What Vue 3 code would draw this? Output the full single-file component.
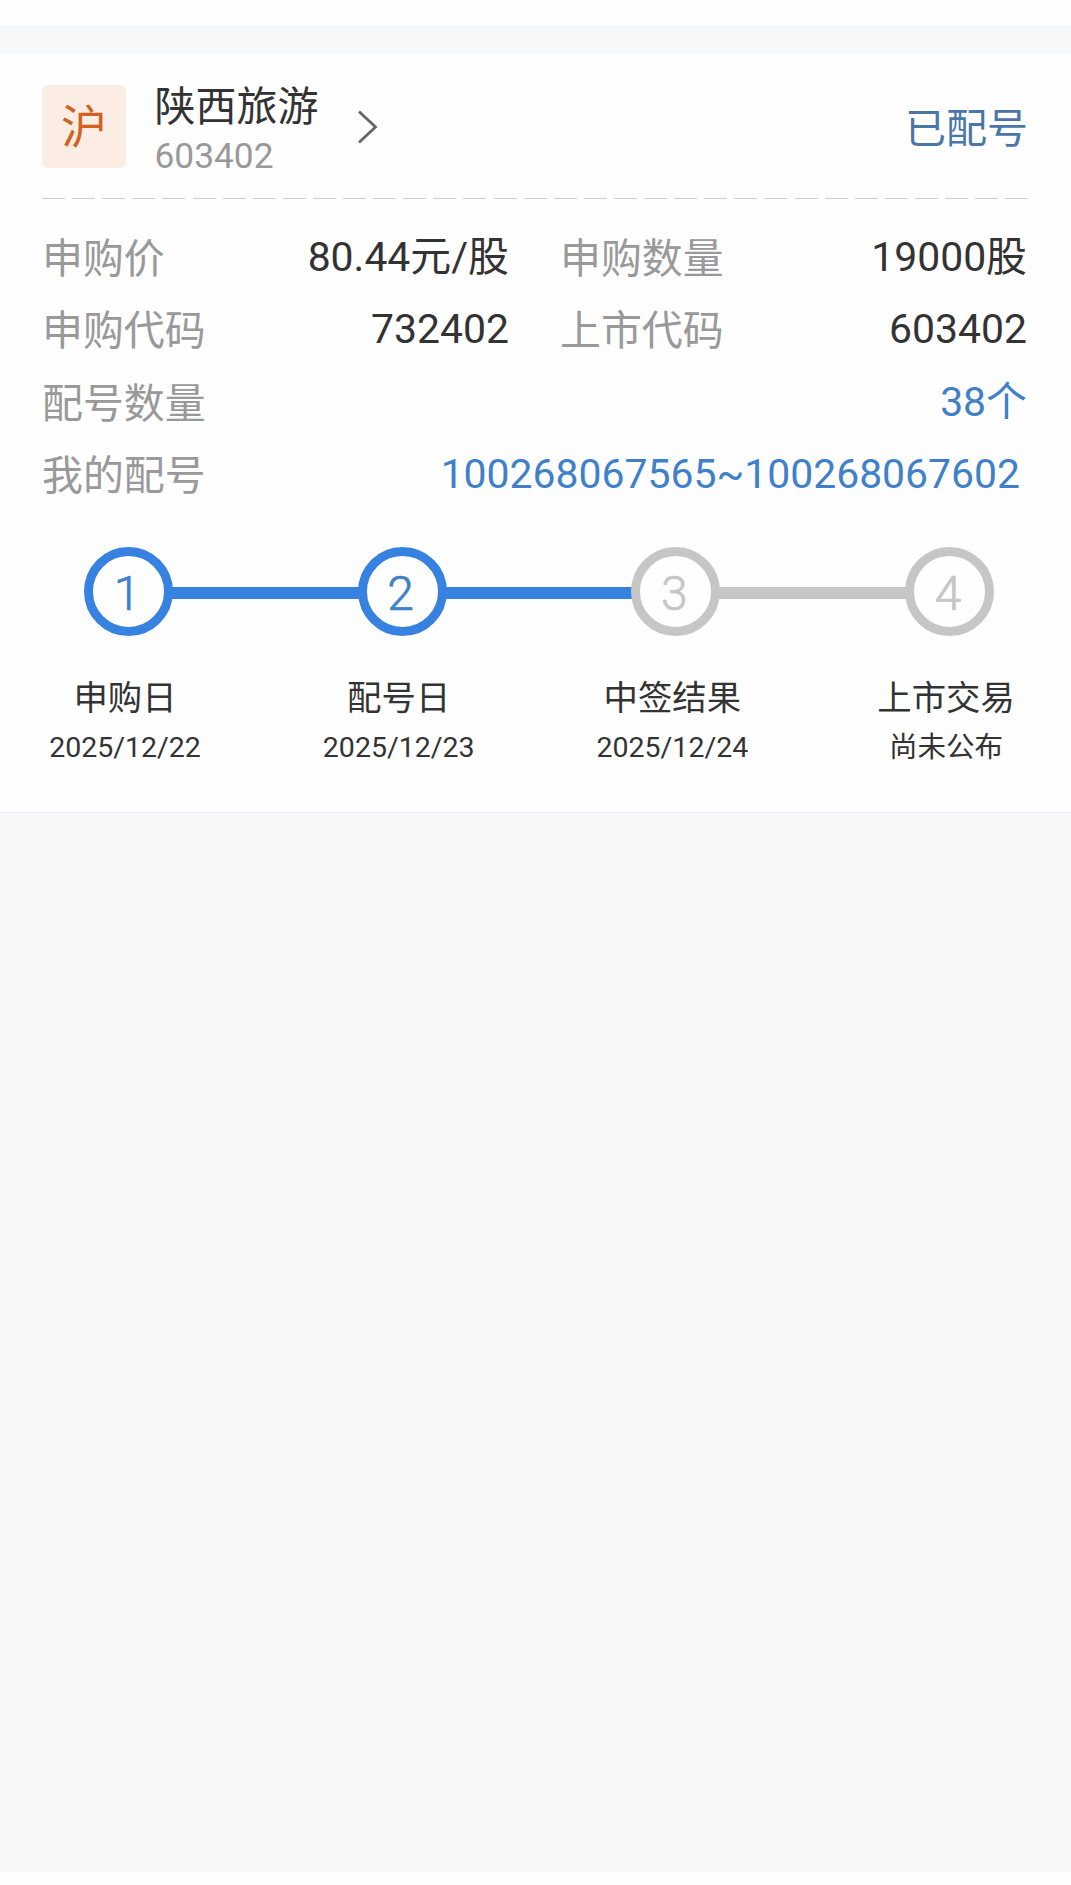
<script setup>
const stock = { market: '沪', name: '陕西旅游', code: '603402', status: '已配号' }

const rows = [
  [
    { label: '申购价', value: '80.44元/股' },
    { label: '申购数量', value: '19000股' },
  ],
  [
    { label: '申购代码', value: '732402' },
    { label: '上市代码', value: '603402' },
  ],
  [{ label: '配号数量', value: '38个', link: true }],
  [{ label: '我的配号', value: '100268067565~100268067602', link: true, inset: true }],
]

const steps = [
  { title: '申购日', date: '2025/12/22', done: true },
  { title: '配号日', date: '2025/12/23', done: true },
  { title: '中签结果', date: '2025/12/24', done: false },
  { title: '上市交易', date: '尚未公布', done: false },
]
</script>

<template>
  <div class="page">
    <div class="divider"></div>
    <section class="card">
      <header class="head">
        <div class="market">{{ stock.market }}</div>
        <div class="names">
          <div class="name">{{ stock.name }}</div>
          <div class="code">{{ stock.code }}</div>
        </div>
        <svg class="arrow" width="22" height="36" viewBox="0 0 22 36">
          <path d="M2 2.5 L18.5 18 L2 33.5" fill="none" stroke="#666" stroke-width="2.8" />
        </svg>
        <div class="status">{{ stock.status }}</div>
      </header>
      <div class="dashes"></div>

      <div class="info">
        <div v-for="(row, i) in rows" :key="i" class="row">
          <div v-for="c in row" :key="c.label" class="cell">
            <span class="label">{{ c.label }}</span>
            <span class="value" :class="{ link: c.link, inset: c.inset }">{{ c.value }}</span>
          </div>
        </div>
      </div>

      <div class="track">
        <template v-for="(s, i) in steps" :key="s.title">
          <div v-if="i" class="line" :class="{ done: steps[i - 1].done }"></div>
          <div class="dot" :class="{ done: s.done }"><span>{{ i + 1 }}</span></div>
        </template>
      </div>
      <div class="steps">
        <div v-for="s in steps" :key="s.title" class="step">
          <div class="title">{{ s.title }}</div>
          <div class="date">{{ s.date }}</div>
        </div>
      </div>
    </section>
    <div class="rest"></div>
  </div>
</template>

<style>
body {
  background: #fefefe;
}
</style>

<style scoped>
.page {
  box-sizing: border-box;
  display: flex;
  flex-direction: column;
  width: 1071px;
  height: 1885px;
  padding: 25px 0 13px;
  font-family: Roboto, "Noto Sans CJK SC", sans-serif;
  color: #333;
  background: #fefefe;
}
.divider {
  height: 29px;
  background: #f7f8fa;
}
.card {
  box-sizing: border-box;
  height: 759px;
  padding-top: 24px;
  border-bottom: 1px solid #ececee;
}
.head {
  display: flex;
  align-items: flex-start;
  height: 120px;
  padding: 0 43px 0 42px;
}
.market {
  width: 84px;
  height: 83px;
  margin-top: 7px;
  border-radius: 6px;
  background: #fcede4;
  color: #d2611f;
  font-size: 46px;
  line-height: 84px;
  text-align: center;
}
.names {
  margin: 2px 0 0 28.5px;
}
.name {
  font-size: 41px;
  line-height: 54px;
}
.code {
  color: #999;
  font-size: 35.3px;
  line-height: 44px;
}
.arrow {
  margin: 31px 0 0 38.5px;
}
.status {
  margin-left: auto;
  color: #4a76a8;
  font-size: 41px;
  line-height: 103px;
}
.dashes {
  height: 1px;
  margin: 0 43px 0 42px;
  background: repeating-linear-gradient(90deg, #ccc 0 23px, transparent 23px 30.1px);
}
.info {
  height: 290px;
  padding: 22px 44px 0 42px;
}
.row {
  display: flex;
  gap: 51px;
  height: 72.4px;
  font-size: 40.9px;
  line-height: 72px;
}
.cell {
  display: flex;
  flex: 1;
  justify-content: space-between;
}
.label {
  padding-top: 2px;
  color: #999;
}
.link {
  color: #3f80cb;
}
.inset {
  margin-right: 7px;
}
.track {
  display: flex;
  align-items: center;
  margin-top: 36px;
  padding: 0 77px 0 84px;
}
.dot {
  box-sizing: border-box;
  width: 89px;
  height: 89px;
  border: 9px solid #c6c6c6;
  border-radius: 50%;
  color: #c6c6c6;
  font-size: 48px;
  font-weight: 300;
  line-height: 75px;
  text-align: center;
  -webkit-text-stroke: 0.7px currentColor;
}
.dot.done {
  border-color: #3781e0;
  color: #3f80cb;
}
.dot span {
  margin-right: 3px;
}
.line {
  flex: 1;
  height: 12px;
  margin: 2px -1px 0;
  background: #c6c6c6;
}
.line.done {
  background: #3781e0;
}
.steps {
  display: flex;
  margin-top: 37px;
  padding-left: 25px;
}
.step {
  flex: none;
  width: 200px;
  margin-right: 73.7px;
  text-align: center;
}
.title {
  font-size: 34.4px;
  line-height: 50px;
}
.date {
  font-size: 28.5px;
  line-height: 50px;
}
.rest {
  flex: 1;
  background: #f7f8fa;
}
</style>
